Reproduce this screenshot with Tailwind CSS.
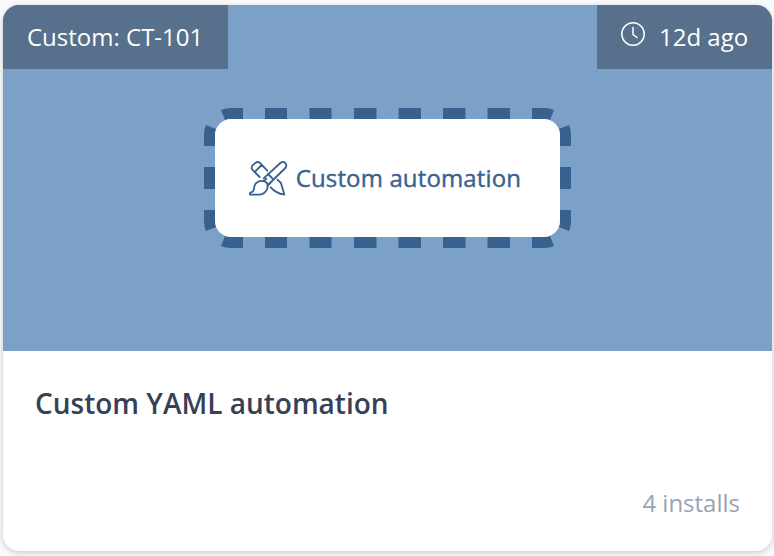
<!DOCTYPE html>
<html lang="en">
<head>
<meta charset="utf-8">
<title>Custom YAML automation</title>
<script src="https://cdn.jsdelivr.net/npm/@tailwindcss/browser@4"></script>
</head>
<body class="h-[556px] overflow-hidden bg-[#f8fafb] pt-[5px] pr-[2px] pl-[3px] font-['Open_Sans','Noto_Sans',sans-serif]">
<article class="flex h-[546px] flex-col overflow-hidden rounded-2xl bg-white shadow-[0_2px_6px_rgba(0,0,0,0.16),0_0_4px_rgba(0,0,0,0.05)]">
  <header class="flex h-[346px] shrink-0 flex-col bg-[#7ba1c8] text-2xl text-white">
    <div class="flex h-16 justify-between">
      <div class="flex w-[225px] items-center bg-[#57708b] pl-6 whitespace-nowrap">Custom: CT-101</div>
      <div class="flex w-[175px] items-center bg-[#57708b] pl-6 whitespace-nowrap">
        <svg class="-mt-1.5 mr-[14px] size-6 shrink-0" viewBox="0 0 24 24" fill="none" stroke="currentColor" stroke-width="1.5" stroke-linecap="round" stroke-linejoin="round"><circle cx="12" cy="12" r="11.2"/><path d="M12 5.5V12.5L16 15.5"/></svg>
        <span>12d ago</span>
      </div>
    </div>
    <div class="mt-[39px] ml-[201px] grid h-[140px] w-[367px]">
      <svg class="col-start-1 row-start-1 h-[140px] w-[367px]" viewBox="0 0 367 140" fill="none" stroke="#38618f" stroke-width="11">
        <path d="M61 5.5h22M105.500 5.500h22M150 5.500h22.500M194.500 5.500h22.500M239 5.500h22.500M283.500 5.500h22.500M61 134.500h22M105.500 134.500h22M150 134.500h22.500M194.500 134.500h22.500M239 134.500h22.500M283.500 134.500h22.500M5.500 59v22M361.500 59v22"/>
        <path d="M39 5.500H27A21.500 21.500 0 0 0 19 7M328 5.500H340A21.500 21.500 0 0 1 348 7M39 134.500H27A21.500 21.500 0 0 1 19 133M328 134.500H340A21.500 21.500 0 0 0 348 133M5.500 38V27A21.500 21.500 0 0 1 7 19M361.500 38V27A21.500 21.500 0 0 0 360 19M5.500 102V113A21.500 21.500 0 0 0 7 121M361.500 102V113A21.500 21.500 0 0 1 360 121"/>
      </svg>
      <div class="z-10 col-start-1 row-start-1 m-[10.700px] flex items-center rounded-2xl bg-white pl-[33px] font-medium text-[#38618f]">
        <svg class="h-[37px] w-[40px] shrink-0" viewBox="158 185 120 111" fill="none" stroke="currentColor" stroke-width="5.500" stroke-linecap="round" stroke-linejoin="round">
          <path d="M193 236L171 214Q167 208 171 202L181 193Q187 189 193 193L216 217M180 219L199 200"/>
          <path d="M205 240L255 194Q263 188 270 194Q276 201 270 209L218 260M218 227L234 243"/>
          <path d="M205 248C216 250 220 261 215 273C209 285 202 289 190 289H164C162 284 166 282 172 280C179 276 173 265 181 256C187 249 195 247 205 248ZM205 248L213 241M216 262L225 254"/>
          <path d="M246 244L257 254L267 289Q242 285 226 267"/>
        </svg>
        <span class="ml-[8px] tracking-[0.14px] whitespace-nowrap [-webkit-text-stroke:0.4px_#38618f]">Custom automation</span>
      </div>
    </div>
  </header>
  <div class="flex flex-1 flex-col justify-between px-8 pt-[33px] pb-[32px]">
    <h2 class="text-[28px] leading-[38px] font-semibold text-[#374056]">Custom YAML automation</h2>
    <p class="text-right text-2xl text-[#99a2b4]">4 installs</p>
  </div>
</article>
</body>
</html>
